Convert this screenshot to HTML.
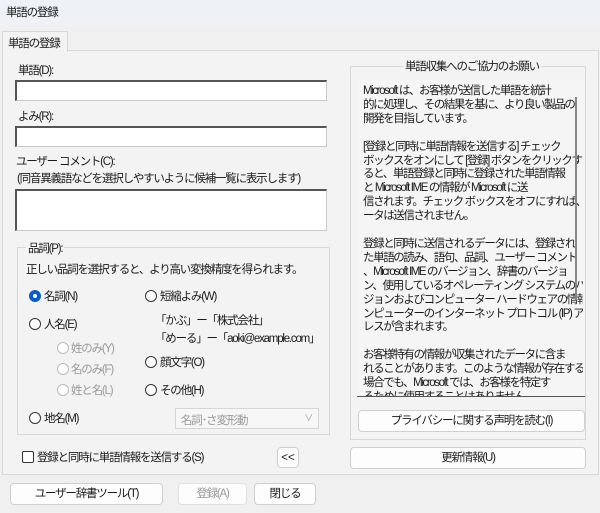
<!DOCTYPE html>
<html><head><meta charset="utf-8"><style>
*{box-sizing:border-box;margin:0;padding:0}
body{width:600px;height:513px;background:#f0f0f0;font-family:"Liberation Sans","Noto Sans CJK JP",sans-serif;font-size:11.5px;letter-spacing:-1.2px;color:#1a1a1a;position:relative;overflow:hidden}
.a{position:absolute;white-space:nowrap}
.title{left:0;top:0;width:600px;height:26px;background:#eef1f6}
.inp{position:absolute;background:#fff;border:1px solid #c8c8c8;border-top:2px solid #555;border-left:2px solid #555}
.btn{position:absolute;background:#fdfdfd;border:1px solid #cfcfcf;border-radius:4px;text-align:center;line-height:20px}
.r{position:absolute;width:12px;height:12px;border:1px solid #333;border-radius:50%;background:#fff}
.rd{border-color:#bbb}
.g{color:#999}
</style></head><body>
<div class="a title"></div>
<div class="a" style="left:6px;top:4px">単語の登録</div>
<div class="a" style="left:2px;top:50px;width:597px;height:425px;border:1px solid #d8d8d8;background:#f3f3f3"></div>
<div class="a" style="left:2px;top:31px;width:66px;height:21px;border:1px solid #d8d8d8;border-bottom:none;background:#f3f3f3;padding:3px 0 0 5px">単語の登録</div>
<div class="a" style="left:18px;top:62px">単語(D):</div>
<div class="inp" style="left:15px;top:80px;width:312px;height:21px"></div>
<div class="a" style="left:18px;top:108px">よみ(R):</div>
<div class="inp" style="left:15px;top:126px;width:312px;height:21px"></div>
<div class="a" style="left:16px;top:153px">ユーザー コメント(C):</div>
<div class="a" style="left:17px;top:170px">(同音異義語などを選択しやすいように候補一覧に表示します)</div>
<div class="inp" style="left:15px;top:189px;width:312px;height:42px"></div>
<div class="a" style="left:17px;top:247px;width:313px;height:188px;border:1px solid #d8d8d8"></div>
<div class="a" style="left:26px;top:240px;background:#f3f3f3;padding:0 2px">品詞(P):</div>
<div class="a" style="left:26px;top:261px">正しい品詞を選択すると、より高い変換精度を得られます。</div>
<div class="r" style="left:29px;top:290px;border:4px solid #0a5cc8"></div><div class="a" style="left:44px;top:288px">名詞(N)</div>
<div class="r" style="left:29px;top:318px"></div><div class="a" style="left:44px;top:316px">人名(E)</div>
<div class="r rd" style="left:57px;top:342px"></div><div class="a g" style="left:71px;top:340px">姓のみ(Y)</div>
<div class="r rd" style="left:57px;top:363px"></div><div class="a g" style="left:71px;top:361px">名のみ(F)</div>
<div class="r rd" style="left:57px;top:384px"></div><div class="a g" style="left:71px;top:382px">姓と名(L)</div>
<div class="r" style="left:29px;top:412px"></div><div class="a" style="left:44px;top:410px">地名(M)</div>
<div class="r" style="left:145px;top:290px"></div><div class="a" style="left:160px;top:288px">短縮よみ(W)</div>
<div class="a" style="left:155px;top:312px">「かぶ」ー「株式会社」</div>
<div class="a" style="left:155px;top:330px">「めーる」ー「aoki@example.com」</div>
<div class="r" style="left:145px;top:356px"></div><div class="a" style="left:160px;top:354px">顔文字(O)</div>
<div class="r" style="left:145px;top:384px"></div><div class="a" style="left:160px;top:382px">その他(H)</div>
<div class="a g" style="left:175px;top:408px;width:144px;height:21px;border:1px solid #d5d5d5;background:#f7f7f7;padding:3px 5px">名詞･さ変形動<span style="position:absolute;right:6px;top:2px;font-size:9px">∨</span></div>
<div class="a" style="left:22px;top:451px;width:12px;height:12px;border:1px solid #333;border-radius:2px;background:#fff"></div>
<div class="a" style="left:37px;top:449px">登録と同時に単語情報を送信する(S)</div>
<div class="btn" style="left:277px;top:447px;width:22px;height:21px;letter-spacing:0">&lt;&lt;</div>
<div class="btn" style="left:10px;top:483px;width:153px;height:22px">ユーザー辞書ツール(T)</div>
<div class="btn g" style="left:178px;top:483px;width:69px;height:22px;border-color:#e0e0e0">登録(A)</div>
<div class="btn" style="left:254px;top:483px;width:62px;height:22px">閉じる</div>
<div class="a" style="left:350px;top:66px;width:236px;height:374px;border:1px solid #d8d8d8"></div>
<div class="a" style="left:403px;top:58px;background:#f3f3f3;padding:0 2px">単語収集へのご協力のお願い</div>
<div class="a" style="left:357px;top:80px;width:228px;height:317px;background:#f5f5f5;border-bottom:1px solid #555;overflow:hidden"></div>
<div class="a" style="left:363px;top:80px;width:220px;height:316px;overflow:hidden;font-size:11.5px;letter-spacing:-1.4px;line-height:13.9px;padding-top:5px">Microsoft は、お客様が送信した単語を統計<br>的に処理し、その結果を基に、より良い製品の<br>開発を目指しています。<br><br>[登録と同時に単語情報を送信する] チェック<br>ボックスをオンにして [登録] ボタンをクリックす<br>ると、単語登録と同時に登録された単語情報<br>と Microsoft IME の情報が Microsoft に送<br>信されます。チェック ボックスをオフにすれば、デ<br>ータは送信されません。<br><br>登録と同時に送信されるデータには、登録され<br>た単語の読み、語句、品詞、ユーザー コメント<br>、Microsoft IME のバージョン、辞書のバージョ<br>ン、使用しているオペレーティング システムのバー<br>ジョンおよびコンピューター ハードウェアの情報、コ<br>ンピューターのインターネット プロトコル (IP) アド<br>レスが含まれます。<br><br>お客様特有の情報が収集されたデータに含ま<br>れることがあります。このような情報が存在する<br>場合でも、Microsoft では、お客様を特定す<br>るために使用することはありません。</div>
<div class="a" style="left:575px;top:97px;width:2px;height:203px;background:#888"></div>
<div class="btn" style="left:358px;top:410px;width:227px;height:22px">プライバシーに関する声明を読む(I)</div>
<div class="btn" style="left:350px;top:447px;width:236px;height:22px">更新情報(U)</div>
</body></html>
